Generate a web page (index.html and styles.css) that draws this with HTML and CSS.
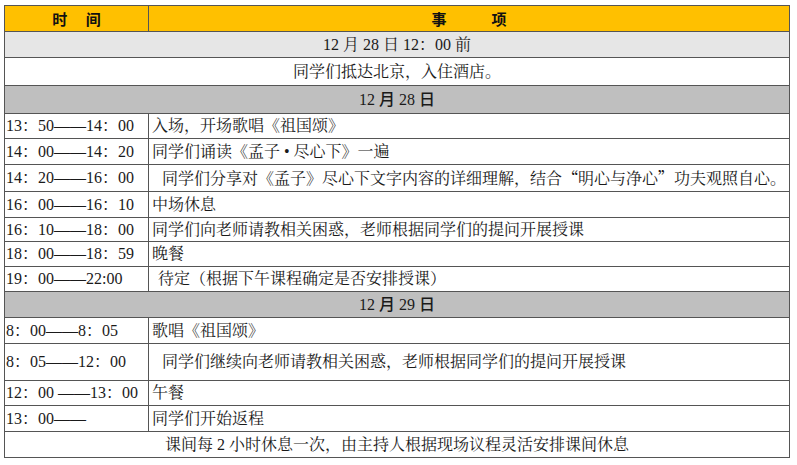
FILE: index.html
```html
<!DOCTYPE html>
<html lang="zh-CN">
<head>
<meta charset="utf-8">
<title>日程安排</title>
<link rel="stylesheet" href="styles.css">
</head>
<body>
<table class="schedule">
  <colgroup><col class="c-time"><col class="c-item"></colgroup>
  <tr class="head h26"><th>时　 间</th><th>事　　　项</th></tr>
  <tr class="sub h26"><td colspan="2" class="center">12 月 28 日 12：00 前</td></tr>
  <tr class="h28"><td colspan="2" class="center">同学们抵达北京，入住酒店。</td></tr>
  <tr class="day h28"><td colspan="2" class="center">12 月 28 日</td></tr>
  <tr class="h25"><td class="t">13：50——14：00</td><td>入场，开场歌唱《祖国颂》</td></tr>
  <tr class="h26"><td class="t">14：00——14：20</td><td>同学们诵读《孟子 • 尽心下》一遍</td></tr>
  <tr class="h27"><td class="t">14：20——16：00</td><td class="indent">同学们分享对《孟子》尽心下文字内容的详细理解，结合<span class="q">“</span>明心与净心<span class="q">”</span>功夫观照自心。</td></tr>
  <tr class="h26"><td class="t">16：00——16：10</td><td>中场休息</td></tr>
  <tr class="h24"><td class="t">16：10——18：00</td><td>同学们向老师请教相关困惑，老师根据同学们的提问开展授课</td></tr>
  <tr class="h25"><td class="t">18：00——18：59</td><td>晚餐</td></tr>
  <tr class="h25"><td class="t">19：00——22:00</td><td class="indent-s">待定（根据下午课程确定是否安排授课）</td></tr>
  <tr class="day h26"><td colspan="2" class="center">12 月 29 日</td></tr>
  <tr class="h26"><td class="t">8：00——8：05</td><td>歌唱《祖国颂》</td></tr>
  <tr class="h37"><td class="t">8：05——12：00</td><td class="indent">同学们继续向老师请教相关困惑，老师根据同学们的提问开展授课</td></tr>
  <tr class="h25"><td class="t">12：00 ——13：00</td><td>午餐</td></tr>
  <tr class="h26"><td class="t">13：00——</td><td>同学们开始返程</td></tr>
  <tr class="h26"><td colspan="2" class="center">课间每 2 小时休息一次，由主持人根据现场议程灵活安排课间休息</td></tr>
</table>
</body>
</html>
```
FILE: styles.css
```css
html, body {
  margin: 0;
  padding: 0;
  background: #ffffff;
}
body {
  padding: 5px 0 0 4px;
  font-family: "Liberation Serif", "Noto Serif CJK SC", "Noto Sans CJK SC", serif;
  font-size: 16px;
  color: #1a1a1a;
}
.schedule {
  border-collapse: collapse;
  width: 786px;
  table-layout: fixed;
  border: 1px solid #333;
}
.c-time { width: 144px; }
.schedule th,
.schedule td {
  border: 1px solid #555;
  padding: 0 0 0 3px;
  line-height: 18px;
  vertical-align: middle;
  text-align: left;
  white-space: nowrap;
  overflow: hidden;
}
.schedule td.t {
  padding-left: 1px;
}
.schedule td.center {
  text-align: center;
  padding-left: 0;
}
.schedule td.indent { padding-left: 13px; }
.schedule td.indent-s { padding-left: 9px; }

.q {
  font-family: "Noto Sans CJK SC", sans-serif;
  display: inline-block;
  width: 16px;
  text-align: center;
}

.head th {
  background: #ffc000;
  font-family: "Noto Sans CJK SC", sans-serif;
  font-weight: 700;
  font-size: 15px;
  text-align: center;
  padding: 0;
  color: #111;
}
.sub td { background: #e6e6e6; }
.day td {
  background: #bfbfbf;
  font-family: "Liberation Serif", "Noto Sans CJK SC", sans-serif;
  font-weight: 500;
}

.h24 { height: 24px; }
.h25 { height: 25px; }
.h26 { height: 26px; }
.h27 { height: 27px; }
.h28 { height: 28px; }
.h37 { height: 37px; }
```
